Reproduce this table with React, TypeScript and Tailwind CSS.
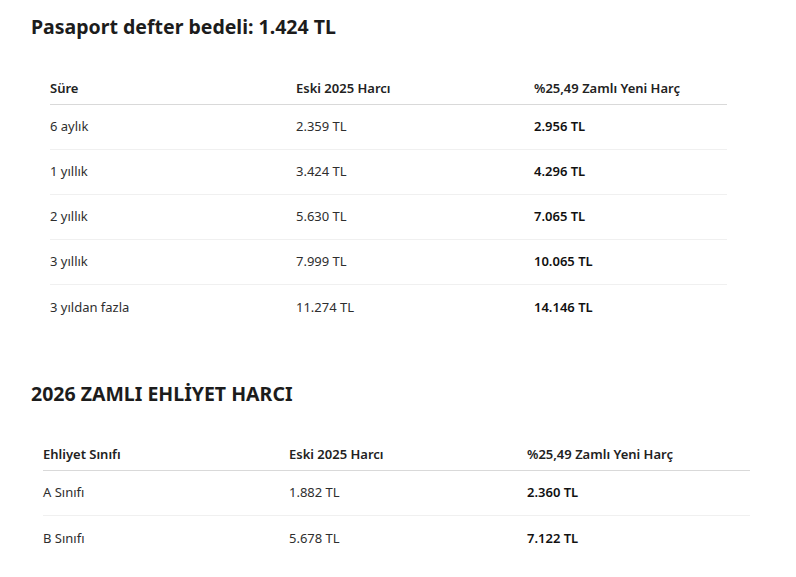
const pasaport = [
  ["6 aylık", "2.359 TL", "2.956 TL"],
  ["1 yıllık", "3.424 TL", "4.296 TL"],
  ["2 yıllık", "5.630 TL", "7.065 TL"],
  ["3 yıllık", "7.999 TL", "10.065 TL"],
  ["3 yıldan fazla", "11.274 TL", "14.146 TL"],
];

const ehliyet = [
  ["A Sınıfı", "1.882 TL", "2.360 TL"],
  ["B Sınıfı", "5.678 TL", "7.122 TL"],
];

function FeeTable({
  head,
  rows,
  className,
}: Readonly<{ head: string[]; rows: string[][]; className: string }>) {
  return (
    <div className={className}>
      <div className="grid h-[32px] grid-cols-[246px_238px_1fr] items-center border-b border-[#d9d9d9] font-semibold text-[#222]">
        {head.map((h) => (
          <div key={h}>{h}</div>
        ))}
      </div>
      {rows.map((r, i) => (
        <div
          key={r[0]}
          className={`grid h-[45px] grid-cols-[246px_238px_1fr] items-center ${i < rows.length - 1 ? "border-b border-[#f0f0f0]" : ""}`}
        >
          <div className="text-[#2e2e2e]">{r[0]}</div>
          <div className="text-[#2e2e2e]">{r[1]}</div>
          <div className="font-semibold text-[#111]">{r[2]}</div>
        </div>
      ))}
    </div>
  );
}

export default function App() {
  return (
    <div className="min-h-[577px] w-[796px] bg-white pl-[31px] pt-[14px] font-['Noto_Sans',sans-serif] text-[13px]">
      <h2 className="text-[19.5px] font-bold leading-[26px] text-[#1c1c1c]">Pasaport defter bedeli: 1.424 TL</h2>
      <FeeTable
        className="ml-[19px] mt-[33px] w-[677px]"
        head={["Süre", "Eski 2025 Harcı", "%25,49 Zamlı Yeni Harç"]}
        rows={pasaport}
      />
      <h2 className="mt-[51px] text-[19.5px] font-bold leading-[26px] text-[#1c1c1c]">2026 ZAMLI EHLİYET HARCI</h2>
      <FeeTable
        className="ml-[12px] mt-[32px] w-[707px]"
        head={["Ehliyet Sınıfı", "Eski 2025 Harcı", "%25,49 Zamlı Yeni Harç"]}
        rows={ehliyet}
      />
    </div>
  );
}
